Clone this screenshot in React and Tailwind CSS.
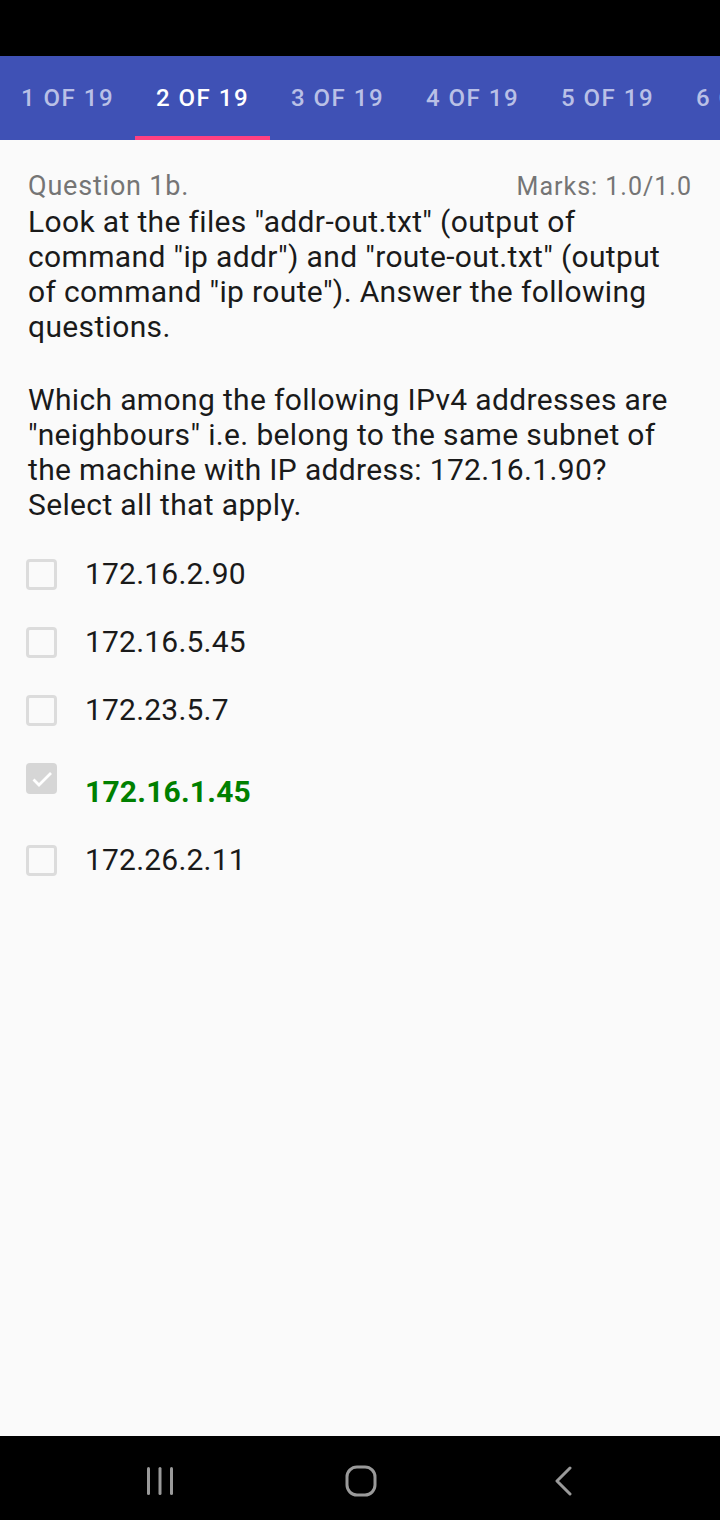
const tabs = ["1 OF 19", "2 OF 19", "3 OF 19", "4 OF 19", "5 OF 19", "6 OF 19"];

const options = [
  { label: "172.16.2.90", checked: false },
  { label: "172.16.5.45", checked: false },
  { label: "172.23.5.7", checked: false },
  { label: "172.16.1.45", checked: true },
  { label: "172.26.2.11", checked: false },
];

const Checkbox = ({ checked }) => {
  if (checked) {
    return (
      <div className="w-[31px] h-[31px] flex-none rounded-[4px] bg-[#d6d6d6] flex items-center justify-center">
        <svg width="24" height="24" viewBox="0 0 24 24" fill="none">
          <path d="M3.5 12.5l5.5 5.5L21 6" stroke="#ffffff" strokeWidth="2.8" />
        </svg>
      </div>
    );
  }
  return (
    <div className="w-[31px] h-[31px] flex-none rounded-[4px] border-[3px] border-[#dcdcdc] bg-[#fafafa]" />
  );
};

const NavBar = () => (
  <div className="h-[84px] bg-black flex items-center pl-[147px] pt-[6px]">
    <svg width="26" height="30" viewBox="0 0 26 30">
      <rect x="0" y="1" width="3" height="28" rx="1.5" fill="#9a9a9a" />
      <rect x="11.5" y="1" width="3" height="28" rx="1.5" fill="#9a9a9a" />
      <rect x="23" y="1" width="3" height="28" rx="1.5" fill="#9a9a9a" />
    </svg>
    <svg className="ml-[172px]" width="32" height="32" viewBox="0 0 32 32">
      <rect x="2" y="2" width="28" height="28" rx="10" fill="none" stroke="#9a9a9a" strokeWidth="3" />
    </svg>
    <svg className="ml-[177px]" width="20" height="30" viewBox="0 0 20 30">
      <path d="M16 2L3 15l13 13" fill="none" stroke="#9a9a9a" strokeWidth="3" strokeLinecap="round" strokeLinejoin="round" />
    </svg>
  </div>
);

export default function App() {
  return (
    <div
      className="w-[720px] h-[1520px] flex flex-col bg-[#fafafa] overflow-hidden"
      style={{ fontFamily: "Roboto, 'Noto Sans', sans-serif" }}
    >
      <div className="h-[56px] bg-black flex-none" />

      <div className="h-[84px] bg-[#3f51b5] flex flex-none overflow-hidden">
        {tabs.map((t, i) => (
          <div
            key={t}
            className={`w-[135px] flex-none flex items-center justify-center relative text-[24px] font-medium tracking-[1.5px] whitespace-nowrap ${
              i === 1 ? "text-white" : "text-[#b9c0e6]"
            }`}
          >
            {t}
            {i === 1 && (
              <div className="absolute left-0 right-0 bottom-0 h-[4px] bg-[#ff4081]" />
            )}
          </div>
        ))}
      </div>

      <div className="flex-1 px-[28px] pt-[29px]">
        <div className="flex justify-between items-center h-[35px]">
          <span className="text-[27px] tracking-[0.8px] text-[#757575]">Question 1b.</span>
          <span className="text-[25px] tracking-[1px] text-[#757575]">Marks: 1.0/1.0</span>
        </div>
        <p className="text-[30px] leading-[35px] tracking-[0.35px] text-[#1a1a1a]">
          Look at the files "addr-out.txt" (output of command "ip addr") and
          "route-out.txt" (output of command "ip route"). Answer the following
          questions.
        </p>
        <p className="text-[30px] leading-[35px] tracking-[0.35px] text-[#1a1a1a] mt-[38px]">
          Which among the following IPv4 addresses are "neighbours" i.e. belong
          to the same subnet of the machine with IP address: 172.16.1.90? Select
          all that apply.
        </p>

        <div className="mt-[18px] -ml-[2px]">
          {options.map((o) =>
            o.checked ? (
              <div key={o.label} className="flex items-start h-[82px]">
                <div className="mt-[19px]">
                  <Checkbox checked />
                </div>
                <span className="ml-[28px] mt-[31px] text-[30px] leading-[34px] tracking-[0.2px] font-bold text-[#008000]">
                  {o.label}
                </span>
              </div>
            ) : (
              <div key={o.label} className="flex items-center h-[68px]">
                <Checkbox />
                <span className="ml-[28px] text-[30px] leading-[34px] tracking-[0.2px] text-[#1a1a1a]">
                  {o.label}
                </span>
              </div>
            )
          )}
        </div>
      </div>

      <NavBar />
    </div>
  );
}
